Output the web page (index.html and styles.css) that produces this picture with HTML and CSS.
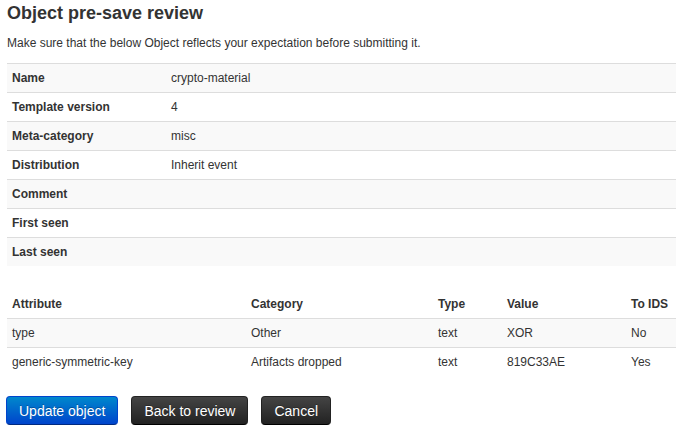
FILE: index.html
```html
<!DOCTYPE html>
<html>
<head>
<meta charset="utf-8">
<link rel="stylesheet" href="styles.css">
</head>
<body>
<div class="page">
  <h2 class="title">Object pre-save review</h2>
  <p class="lead">Make sure that the below Object reflects your expectation before submitting it.</p>
  <table class="tbl meta">
    <tbody>
      <tr><th>Name</th><td>crypto-material</td></tr>
      <tr><th>Template version</th><td>4</td></tr>
      <tr><th>Meta-category</th><td>misc</td></tr>
      <tr><th>Distribution</th><td>Inherit event</td></tr>
      <tr><th>Comment</th><td></td></tr>
      <tr><th>First seen</th><td></td></tr>
      <tr><th>Last seen</th><td></td></tr>
    </tbody>
  </table>
  <table class="tbl attrs">
    <thead>
      <tr><th class="c1">Attribute</th><th class="c2">Category</th><th class="c3">Type</th><th class="c4">Value</th><th>To IDS</th></tr>
    </thead>
    <tbody>
      <tr><td>type</td><td>Other</td><td>text</td><td>XOR</td><td>No</td></tr>
      <tr><td>generic-symmetric-key</td><td>Artifacts dropped</td><td>text</td><td>819C33AE</td><td>Yes</td></tr>
    </tbody>
  </table>
  <div class="actions">
    <button class="btn btn-primary">Update object</button>
    <button class="btn btn-inverse">Back to review</button>
    <button class="btn btn-inverse">Cancel</button>
  </div>
</div>
</body>
</html>
```
FILE: styles.css
```css
html, body {
  margin: 0;
  padding: 0;
  background: #fff;
}
body {
  font-family: "Liberation Sans", Arial, sans-serif;
  font-size: 12px;
  color: #333;
}
.page {
  padding: 1px 0 0 7px;
}
.title {
  margin: 1px 0 0 0;
  font-size: 18px;
  line-height: 22px;
  font-weight: bold;
  color: #333;
}
.lead {
  margin: 9px 0 0 0;
  line-height: 20px;
}
.tbl {
  width: 100%;
  border-collapse: collapse;
  border-spacing: 0;
}
.tbl th, .tbl td {
  padding: 4px 5px;
  line-height: 20px;
  text-align: left;
  vertical-align: top;
  border-top: 1px solid #ddd;
}
.tbl th {
  font-weight: bold;
}
.meta {
  margin-top: 10px;
}
.meta th {
  width: 149px;
}
.meta tr:nth-child(odd) th, .meta tr:nth-child(odd) td {
  background: #f9f9f9;
}
.attrs {
  margin-top: 24px;
}
.attrs thead th {
  border-top: none;
}
.attrs .c1 { width: 229px; }
.attrs .c2 { width: 177px; }
.attrs .c3 { width: 59px; }
.attrs .c4 { width: 114px; }
.attrs tbody tr:nth-child(odd) td {
  background: #f9f9f9;
}
.actions {
  display: flex;
  gap: 13px;
  margin-top: 20px;
  margin-left: -1px;
}
.btn {
  font-family: "Liberation Sans", Arial, sans-serif;
  font-size: 14px;
  line-height: 20px;
  padding: 4px 12px 3px;
  border-radius: 4px;
  color: #fff;
  cursor: pointer;
  text-shadow: 0 -1px 0 rgba(0,0,0,0.25);
}
.btn-primary {
  background: linear-gradient(to bottom, #0088cc, #0044cc);
  border: 1px solid #0044cc;
  border-color: #0044cc #0044cc #002a80;
}
.btn-inverse {
  background: linear-gradient(to bottom, #444444, #222222);
  border: 1px solid #222;
  border-color: #222 #222 #000;
}
```
